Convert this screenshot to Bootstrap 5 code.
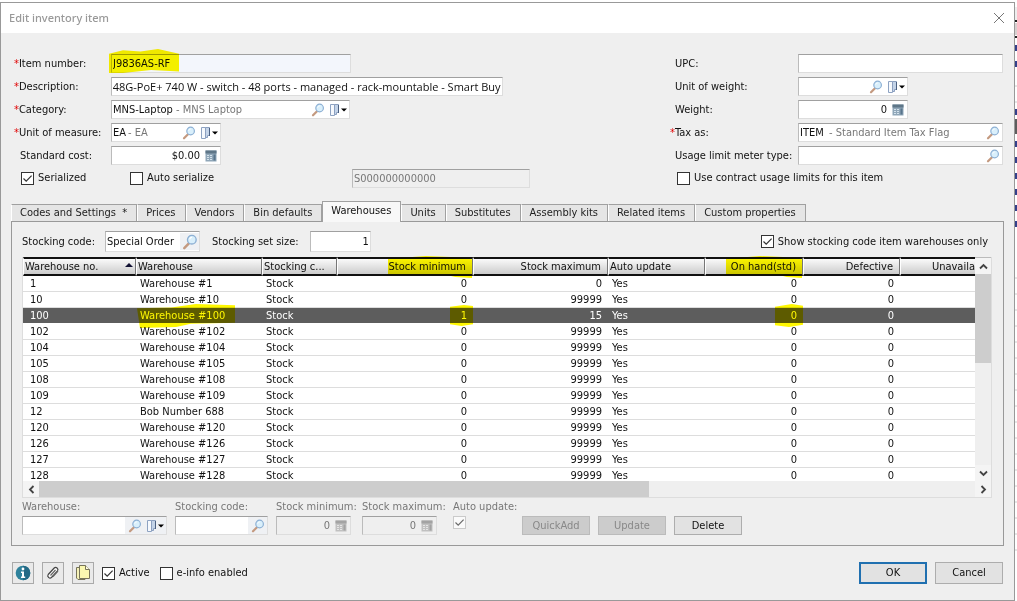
<!DOCTYPE html>
<html lang="en">
<head>
<meta charset="utf-8">
<meta name="viewport" content="width=device-width, initial-scale=1">
<title>Edit inventory item</title>
<link href="https://cdn.jsdelivr.net/npm/bootstrap@5.3.0/dist/css/bootstrap.min.css" rel="stylesheet">
<style>
body{font-family:"DejaVu Sans Condensed","Noto Sans",sans-serif;font-size:11px;line-height:16px;color:#111;background:#fff;min-height:100vh}
.dialog-box{background:#efefef;border:1px solid #999;margin-top:2px;min-width:0}
.title-bar{height:30px;background:#fff;padding:0 9px 0 8px}
.title-bar h1{font-family:"Noto Sans",sans-serif;font-size:11px;line-height:16px;color:#999;margin:0}
.close-btn{border:0;background:none;padding:0;width:12px;height:12px;display:flex}
.behind{width:2px;flex:none}
.form-area{padding:19px 11px 12px}
.left-col{width:518px}
.right-col{width:333px}
.form-line{display:flex;align-items:center;height:23px}
.form-line:last-child{height:22px}
.form-line>label.cap{width:99px;padding-left:8px}
.right-col .form-line>label.cap{width:128px;padding-left:5px}
.form-line>label.req{padding-left:2px!important}
.req::before{content:"*";color:#e00000}
.right-col .form-line>label.req{padding-left:0!important}
.entry{display:flex;align-items:center;height:19px;background:#fff;border:1px solid #ddd;border-top-color:#a0a0a0;border-left-color:#bbb;position:relative;min-width:0}
.entry input{border:0;padding:0 1px;background:transparent;height:17px;min-width:0;flex:1 1 0;color:#111;font:inherit;outline:0}
.entry input.code-part{flex:none;width:64px}
.entry input.short-part{width:16px}
.entry input.item-part{width:30px}
.entry .desc{color:#777;flex:1;white-space:nowrap}
.locked{background:#f3f6fc}
.w-item{width:240px}.w-desc{width:392px;font-family:"Open Sans","Noto Sans",sans-serif}.w-cat{width:239px}.w-unit{width:110px}
.w-wide{width:205px}.w-serial{width:178px}
.tool{border:0;background:transparent;padding:0;display:flex;align-items:center;justify-content:center;height:17px;flex:none;width:19px}
.tool-list{width:22px}
.tinted .tool{background:#eff1f4}
.muted{background:#efefef;color:#777}
.entry.muted input{color:#777}
.tick{appearance:none;-webkit-appearance:none;width:13px;height:13px;border:1px solid #333;background:#fff;margin:0;flex:none}
.tick:checked{background:#fff url("data:image/svg+xml,%3Csvg xmlns='http://www.w3.org/2000/svg' viewBox='0 0 11 11'%3E%3Cpath d='M1.5 5.5 4.2 8.2 9.6 2.6' fill='none' stroke='%23333' stroke-width='1.2'/%3E%3C/svg%3E")}
.tick:disabled{border-color:#bbb;opacity:.7}
.tick-label{display:flex;align-items:center;gap:4px}
.serial-label{width:109px;padding-left:9px}
.auto-label{padding-left:9px}
.contract-label{padding-left:7px}
.active-label{margin-right:10px}
.tab-strip{padding:0 10px;height:20px;display:flex;align-items:flex-end;flex-wrap:nowrap}
.tab-strip .nav-link{height:17px;padding:0 9px 0 8px;border:1px solid #a0a0a0;border-width:1px 1px 0;border-left-color:#fff;border-radius:0;background:#e5e5e5;color:#222;font-size:11px;line-height:16px;white-space:nowrap}
.tab-strip .nav-link.active{height:21px;background:#f8f8f8;border-left-color:#a0a0a0;margin-bottom:-1px;position:relative;line-height:18px;color:#111}
.panel{margin:0 10px;border:1px solid #999;padding:8px 11px 10px 10px}
.search-row{height:23px;margin-bottom:4px}
.scode{width:95px;margin:0 12px 0 10px;height:21px}
.setsize{width:61px;margin-left:11px;height:21px}
.grid-frame{border:1px solid #ddd;border-top:0;display:grid;grid-template-columns:1fr 16px;background:#efefef}
.grid-view{height:224px;overflow-x:clip;overflow-y:visible;background:#fff;min-width:0}
.stock{table-layout:fixed;width:100%;border-collapse:separate;border-spacing:0;margin:0}
.stock th,.stock td{padding:0;white-space:nowrap;position:relative;font-weight:400}
.stock th{height:19px;line-height:14px;border-top:2px solid #111;border-bottom:2px solid #111;border-right:1px solid #777;border-left:1px solid #fff;background:linear-gradient(#fafafa,#ccc);padding:0 6px 0 1px}
.stock th:last-child{padding:0;border-right:0}
.stock td{height:16px;line-height:15px;border-bottom:1px solid #ddd;padding:0 6px 0 4px}
.stock td:first-child{padding-left:7px}
.stock .num{text-align:right}
.stock tr.picked td{background:#5d5d5d;color:#fff;border-bottom-color:#fff}
.sorted::after{content:"";position:absolute;right:2px;top:4px;border:4px solid transparent;border-top:0;border-bottom-color:#113}
.marker::after{content:"";position:absolute;background:#fff800;mix-blend-mode:multiply;inset:-3px 0 -4px 50px;clip-path:polygon(0 12%,45% 0,75% 5%,100% 15%,100% 100%,80% 95%,70% 86%,0 86%);pointer-events:none;z-index:2}
.marker.name-mark::after{inset:-4px 27px -7px 1px;clip-path:polygon(0 16%,35% 13%,60% 0,100% 5%,100% 72%,55% 76%,40% 88%,3% 92%)}
.marker.one-mark::after{inset:-3px 0 -3px 113px;clip-path:polygon(0 8%,60% 0,100% 5%,100% 92%,50% 100%,0 92%)}
.marker.zero-mark::after{inset:-4px 0 -4px 70px;clip-path:polygon(0 12%,60% 0,100% 8%,100% 90%,50% 100%,0 92%)}
.marker.hand-mark::after{left:20px}
.marker.entry::after{inset:-6px 171px -1px -3px;clip-path:polygon(0 20%,20% 5%,45% 10%,70% 0,100% 20%,100% 94%,60% 88%,20% 100%,0 100%)}
.vbar{display:flex;flex-direction:column;background:#efefef;border-top:1px solid #bbb}
.arrow-btn{border:0;padding:0;background:#f4f4f4;width:16px;height:16px;flex:none;display:flex;align-items:center;justify-content:center}
.vthumb{height:89px;width:16px;background:#cdcdcd}
.hbar{grid-column:1/3;display:flex;height:16px;background:#efefef;position:relative;z-index:3}
.hthumb{width:63%;background:#cdcdcd}
.cap-muted{color:#777}
.edit-row label{display:block;height:18px;line-height:18px;white-space:nowrap}
.e-wh{width:145px;margin-right:8px}
.e-sc{width:93px;margin-right:8px}
.e-num{width:75px;margin-right:11px}
.e-auto{width:69px;margin-left:5px}
.tick-hold{height:19px}
.gray{filter:grayscale(1);opacity:.6}
.flat-btn{width:68px;height:19px;padding:0;border:1px solid #adadad;border-radius:0;background:#e2e2e2;color:#111;font-size:11px;line-height:16px}
.flat-btn:disabled{background:#ccc;border-color:#bbb;color:#888;opacity:1}
.tall{height:22px}
.flat-btn.main-btn{border:2px solid #2070b0}
.icon-btn{width:22px;height:22px;border:1px solid #aaa;background:#eaeaea;padding:0;display:flex;align-items:center;justify-content:center}
.foot{padding:16px 11px 14px}
</style>
</head>
<body class="d-flex">
<svg width="0" height="0" class="position-absolute" aria-hidden="true">
  <symbol id="i-search" viewBox="0 0 14 14"><path d="M2 12.3 6 8.2" stroke="#c49a80" stroke-width="2.2" stroke-linecap="round"/><circle cx="8.6" cy="5" r="3.8" fill="#d9effb" stroke="#8db0d4" stroke-width="1.2"/><path d="M6.700 4.600c.3-1 1-1.600 2-1.600" stroke="#fff" fill="none"/></symbol>
  <symbol id="i-list" viewBox="0 0 18 14"><path d="M1.500 1.500h4v11h-4z" fill="#f6f9fd" stroke="#8ea3c2"/><path d="M5.500 1.500h4v8h-2v2h-2z" fill="#c3d3e8" stroke="#8b9fbf"/><path d="M9.500 2v8" stroke="#4a5f80"/><path d="M12 5.500h6l-3 3z" fill="#000"/></symbol>
  <symbol id="i-calc" viewBox="0 0 12 12"><path d="M.5.5h11v11H.5z" fill="#8fa6b8"/><path d="M.5.5h11v3H.5z" fill="#5e7688"/><path d="M2 5.500h2m1 0h2M2 7.500h2m1 0h2M2 9.500h2m1 0h2" stroke="#d4e2ec"/><path d="M8.500 4.500h2v6h-2z" fill="#58758c"/></symbol>
</svg>

<main class="dialog-box flex-grow-1">
  <header class="title-bar d-flex align-items-center justify-content-between">
    <h1>Edit inventory item</h1>
    <button class="close-btn" aria-label="Close"><svg width="12" height="12"><path d="m1 1 10 10M11 1 1 11" stroke="#777"/></svg></button>
  </header>

  <form class="form-area d-flex justify-content-between">
    <div class="left-col">
      <div class="form-line"><label class="cap req" for="item">Item number:</label><div class="entry locked w-item marker"><input id="item" value="J9836AS-RF"></div></div>
      <div class="form-line"><label class="cap req" for="descr">Description:</label><div class="entry w-desc"><input id="descr" value="2920-48G-PoE+ 740 W - switch - 48 ports - managed - rack-mountable - Smart Buy"></div></div>
      <div class="form-line"><label class="cap req" for="cat">Category:</label><div class="entry w-cat"><input id="cat" class="code-part" value="MNS-Laptop"><span class="desc">- MNS Laptop</span><button type="button" class="tool" aria-label="Find category"><svg width="14" height="14"><use href="#i-search"/></svg></button><button type="button" class="tool tool-list" aria-label="Category list"><svg width="18" height="14"><use href="#i-list"/></svg></button></div></div>
      <div class="form-line"><label class="cap req" for="uom">Unit of measure:</label><div class="entry w-unit"><input id="uom" class="code-part short-part" value="EA"><span class="desc">- EA</span><button type="button" class="tool" aria-label="Find unit"><svg width="14" height="14"><use href="#i-search"/></svg></button><button type="button" class="tool tool-list" aria-label="Unit list"><svg width="18" height="14"><use href="#i-list"/></svg></button></div></div>
      <div class="form-line"><label class="cap" for="cost">Standard cost:</label><div class="entry w-unit"><input id="cost" class="text-end" value="$0.00"><button type="button" class="tool" aria-label="Cost calculator"><svg width="12" height="12"><use href="#i-calc"/></svg></button></div></div>
      <div class="form-line justify-content-between"><div class="d-flex"><label class="tick-label serial-label"><input type="checkbox" class="tick" checked>Serialized</label><label class="tick-label auto-label"><input type="checkbox" class="tick">Auto serialize</label></div><div class="entry muted w-serial"><input aria-label="Serial format" value="S000000000000" disabled></div></div>
    </div>
    <div class="right-col">
      <div class="form-line"><label class="cap" for="upc">UPC:</label><div class="entry w-wide"><input id="upc"></div></div>
      <div class="form-line"><label class="cap" for="uow">Unit of weight:</label><div class="entry w-unit"><input id="uow"><button type="button" class="tool" aria-label="Find weight unit"><svg width="14" height="14"><use href="#i-search"/></svg></button><button type="button" class="tool tool-list" aria-label="Weight unit list"><svg width="18" height="14"><use href="#i-list"/></svg></button></div></div>
      <div class="form-line"><label class="cap" for="wt">Weight:</label><div class="entry w-unit"><input id="wt" class="text-end" value="0"><button type="button" class="tool" aria-label="Weight calculator"><svg width="12" height="12"><use href="#i-calc"/></svg></button></div></div>
      <div class="form-line"><label class="cap req" for="tax">Tax as:</label><div class="entry w-wide"><input id="tax" class="code-part item-part" value="ITEM"><span class="desc">- Standard Item Tax Flag</span><button type="button" class="tool" aria-label="Find tax"><svg width="14" height="14"><use href="#i-search"/></svg></button></div></div>
      <div class="form-line"><label class="cap" for="meter">Usage limit meter type:</label><div class="entry w-wide"><input id="meter"><button type="button" class="tool" aria-label="Find meter type"><svg width="14" height="14"><use href="#i-search"/></svg></button></div></div>
      <div class="form-line"><label class="tick-label contract-label"><input type="checkbox" class="tick">Use contract usage limits for this item</label></div>
    </div>
  </form>

  <nav class="nav tab-strip" aria-label="Sections">
    <a class="nav-link" href="#">Codes and Settings&nbsp; *</a><a class="nav-link" href="#">Prices</a><a class="nav-link" href="#">Vendors</a><a class="nav-link" href="#">Bin defaults</a><a class="nav-link active" href="#">Warehouses</a><a class="nav-link" href="#">Units</a><a class="nav-link" href="#">Substitutes</a><a class="nav-link" href="#">Assembly kits</a><a class="nav-link" href="#">Related items</a><a class="nav-link" href="#">Custom properties</a>
  </nav>

  <section class="panel">
    <div class="d-flex align-items-center search-row">
      <label for="scode">Stocking code:</label>
      <div class="entry tinted scode"><input id="scode" value="Special Order"><button type="button" class="tool" aria-label="Find stocking code"><svg width="16" height="16"><use href="#i-search"/></svg></button></div>
      <label for="setsize">Stocking set size:</label>
      <div class="entry setsize"><input id="setsize" class="text-end" value="1"></div>
      <label class="tick-label ms-auto pe-1"><input type="checkbox" class="tick" checked>Show stocking code item warehouses only</label>
    </div>

    <div class="grid-frame">
      <div class="grid-view">
        <table class="stock">
          <colgroup><col style="width:113px"><col style="width:126px"><col style="width:75px"><col style="width:136px"><col style="width:135px"><col style="width:97px"><col style="width:98px"><col style="width:97px"><col></colgroup>
          <thead><tr><th class="sorted">Warehouse no.</th><th>Warehouse</th><th>Stocking c...</th><th class="num marker">Stock minimum</th><th class="num">Stock maximum</th><th>Auto update</th><th class="num marker hand-mark">On hand(std)</th><th class="num">Defective</th><th class="num">Unavaila</th></tr></thead>
          <tbody id="rows"></tbody>
        </table>
      </div>
      <div class="vbar">
        <button type="button" class="arrow-btn" aria-label="Scroll up"><svg width="9" height="7"><path d="m1 5.500 3.500-3.500L8 5.500" fill="none" stroke="#444" stroke-width="1.800"/></svg></button>
        <div class="vthumb"></div>
        <button type="button" class="arrow-btn mt-auto" aria-label="Scroll down"><svg width="9" height="7"><path d="m1 1.500 3.500 3.500L8 1.500" fill="none" stroke="#444" stroke-width="1.800"/></svg></button>
      </div>
      <div class="hbar">
        <button type="button" class="arrow-btn" aria-label="Scroll left"><svg width="7" height="9"><path d="M5.500 1 2 4.500 5.500 8" fill="none" stroke="#444" stroke-width="1.800"/></svg></button>
        <div class="hthumb"></div>
        <button type="button" class="arrow-btn ms-auto" aria-label="Scroll right"><svg width="7" height="9"><path d="M1.500 1 5 4.500 1.500 8" fill="none" stroke="#444" stroke-width="1.800"/></svg></button>
      </div>
    </div>

    <div class="edit-row d-flex align-items-end">
      <div class="e-wh"><label class="cap-muted" for="ewh">Warehouse:</label><div class="entry tinted"><input id="ewh"><button type="button" class="tool" aria-label="Find warehouse"><svg width="14" height="14"><use href="#i-search"/></svg></button><button type="button" class="tool tool-list" aria-label="Warehouse list"><svg width="18" height="14"><use href="#i-list"/></svg></button></div></div>
      <div class="e-sc"><label class="cap-muted" for="esc">Stocking code:</label><div class="entry tinted"><input id="esc"><button type="button" class="tool" aria-label="Find code"><svg width="14" height="14"><use href="#i-search"/></svg></button></div></div>
      <div class="e-num"><label class="cap-muted" for="emin">Stock minimum:</label><div class="entry muted"><input id="emin" class="text-end" value="0" disabled><button type="button" class="tool gray" disabled aria-label="Minimum calculator"><svg width="12" height="12"><use href="#i-calc"/></svg></button></div></div>
      <div class="e-num"><label class="cap-muted" for="emax">Stock maximum:</label><div class="entry muted"><input id="emax" class="text-end" value="0" disabled><button type="button" class="tool gray" disabled aria-label="Maximum calculator"><svg width="12" height="12"><use href="#i-calc"/></svg></button></div></div>
      <div class="e-auto"><label class="cap-muted" for="eauto">Auto update:</label><div class="tick-hold"><input id="eauto" type="checkbox" class="tick" checked disabled></div></div>
      <div class="d-flex gap-2"><button type="button" class="flat-btn" disabled>QuickAdd</button><button type="button" class="flat-btn" disabled>Update</button><button type="button" class="flat-btn">Delete</button></div>
    </div>
  </section>

  <footer class="foot d-flex align-items-center">
    <div class="d-flex gap-2 me-2">
      <button type="button" class="icon-btn" aria-label="Information"><svg width="16" height="16"><circle cx="8" cy="8" r="7.300" fill="#2f829c"/><path d="M8 .7a7.300 7.300 0 0 1 0 14.600z" fill="#246a86"/><circle cx="8" cy="4" r="1.400" fill="#fff"/><path d="M6 6.500h3v5h1.200V13H6v-1.500h1V8H6z" fill="#fff"/></svg></button>
      <button type="button" class="icon-btn" aria-label="Attachment"><svg width="16" height="16"><path d="m3.200 9.500 6-6.500c1.700-1.500 4.800.8 3.300 2.800l-6 6.700c-2 1.600-4.800-1-3.300-3z" fill="#f8f8f8" stroke="#444" stroke-width="1.200"/><path d="m5.500 10.500 5-5.500M8 11.500 13 6" fill="none" stroke="#666" stroke-width="1.200"/></svg></button>
      <button type="button" class="icon-btn" aria-label="Notes"><svg width="18" height="18"><path d="M2.500 3.500H11v12H4l-1.500-1.500z" fill="#f6f2b8" stroke="#77745a"/><path d="M5.500 1.500h6l4 4v9h-10z" fill="#fbf8b0" stroke="#77745a"/><path d="M11.500 1.500v4h4" fill="#fffde0" stroke="#77745a"/></svg></button>
    </div>
    <label class="tick-label active-label"><input type="checkbox" class="tick" checked>Active</label>
    <label class="tick-label"><input type="checkbox" class="tick">e-info enabled</label>
    <div class="d-flex gap-2 ms-auto"><button type="button" class="flat-btn tall main-btn">OK</button><button type="button" class="flat-btn tall">Cancel</button></div>
  </footer>
</main>
<aside class="behind" aria-hidden="true"><svg width="2" height="601"><path d="M0 7h2v13H0z" fill="#eee"/><path d="M0 21h2M0 37h2" stroke="#222" stroke-width="2"/><path d="M0 23h2v12H0z" fill="#d8d0d0"/><path d="M0 119h2v15H0z" fill="#5d5d5d"/><path d="M1 45v6m0 10v6m0 42v6m0 26v6m0 10v6m0 10v6m0 10v6m0 10v6m0 10v6" stroke="#33408a" stroke-width="2"/><path d="M0 86h2m-2 16h2m-2 176h2m-2 16h2m-2 16h2m-2 16h2m-2 16h2m-2 16h2m-2 16h2m-2 16h2m-2 16h2m-2 16h2m-2 16h2m-2 16h2m-2 16h2m-2 16h2m-2 16h2m-2 16h2m-2 16h2m-2 16h2" stroke="#ccc"/></svg></aside>

<script src="https://cdn.jsdelivr.net/npm/bootstrap@5.3.0/dist/js/bootstrap.bundle.min.js"></script>
<script>
const data = [["1"],["10"],["100"],["102"],["104"],["105"],["108"],["109"],["12","Bob Number 688"],["120"],["126"],["127"],["128"]];
document.getElementById("rows").innerHTML = data.map(([no, name]) => {
  const picked = no === "100";
  const mark = c => picked ? " marker " + c : "";
  const max = no === "1" ? 0 : picked ? 15 : 99999;
  return `<tr class="${picked ? "picked" : ""}"><td>${no}</td><td class="${mark("name-mark")}">${name || "Warehouse #" + no}</td><td>Stock</td><td class="num${mark("one-mark")}">${picked ? 1 : 0}</td><td class="num">${max}</td><td>Yes</td><td class="num${mark("zero-mark")}">0</td><td class="num">0</td><td></td></tr>`;
}).join("");
// Show the end of the long description
const descr = document.getElementById("descr");
descr.scrollLeft = descr.scrollWidth;
</script>
</body>
</html>
